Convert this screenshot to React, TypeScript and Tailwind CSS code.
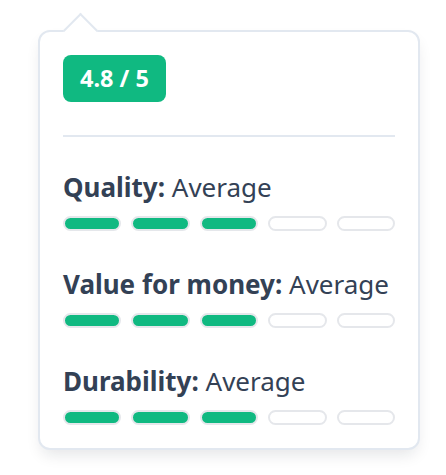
const ratings = [
  { label: "Quality", value: "Average", score: 3 },
  { label: "Value for money", value: "Average", score: 3 },
  { label: "Durability", value: "Average", score: 3 },
];

function Bars({ score }: { score: number }) {
  return (
    <div className="mt-[12px] flex gap-[10px]">
      {[0, 1, 2, 3, 4].map((i) => (
        <div
          key={i}
          className={
            i < score
              ? "h-[15px] flex-1 rounded-full border-2 border-[#e5e7eb] bg-[#10b981]"
              : "h-[15px] flex-1 rounded-full border-2 border-[#e5e7eb] bg-white"
          }
        />
      ))}
    </div>
  );
}

export default function App() {
  return (
    <div className="min-h-screen bg-white pl-[38px] pt-[30px] font-['Noto_Sans',sans-serif]">
      <div className="relative w-[382px] rounded-[12px] border-2 border-[#e2e8f0] bg-white p-[23px] shadow-[0_8px_16px_-4px_rgba(15,23,42,0.12)]">
        <div className="absolute left-[28px] top-[-14px] h-[25px] w-[25px] rotate-45 border-l-2 border-t-2 border-[#e2e8f0] bg-white" />
        <div className="relative">
          <span className="inline-flex h-[47px] items-center rounded-[8px] bg-[#10b981] px-[17px] text-[23.5px] font-bold text-white">
            4.8 / 5
          </span>
          <div className="mt-[33px] border-t-2 border-[#e2e8f0]" />
          {ratings.map((r, idx) => (
            <div key={r.label} className={idx === 0 ? "mt-[33px]" : "mt-[36px]"}>
              <p className="whitespace-nowrap text-[26px] leading-[34px] text-[#334155]">
                <span className="font-bold">{r.label}:</span> {r.value}
              </p>
              <Bars score={r.score} />
            </div>
          ))}
        </div>
      </div>
    </div>
  );
}
